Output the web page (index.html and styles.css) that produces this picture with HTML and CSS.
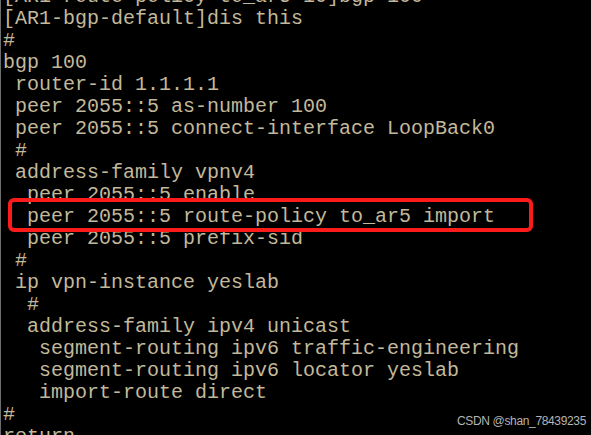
FILE: index.html
```html
<!DOCTYPE html>
<html>
<head>
<meta charset="utf-8">
<link rel="stylesheet" href="styles.css">
</head>
<body>
<div class="screen">
  <div class="term">
    <div class="line">[AR1-route-policy-to_ar5-10]bgp 100</div>
    <div class="line">[AR1-bgp-default]dis this</div>
    <div class="line">#</div>
    <div class="line">bgp 100</div>
    <div class="line"> router-id 1.1.1.1</div>
    <div class="line"> peer 2055::5 as-number 100</div>
    <div class="line"> peer 2055::5 connect-interface LoopBack0</div>
    <div class="line"> #</div>
    <div class="line"> address-family vpnv4</div>
    <div class="line">  peer 2055::5 enable</div>
    <div class="line hl">  peer 2055::5 route-policy to_ar5 import</div>
    <div class="line">  peer 2055::5 prefix-sid</div>
    <div class="line"> #</div>
    <div class="line"> ip vpn-instance yeslab</div>
    <div class="line">  #</div>
    <div class="line">  address-family ipv4 unicast</div>
    <div class="line">   segment-routing ipv6 traffic-engineering</div>
    <div class="line">   segment-routing ipv6 locator yeslab</div>
    <div class="line">   import-route direct</div>
    <div class="line">#</div>
    <div class="line">return</div>
  </div>
  <div class="watermark">CSDN @shan_78439235</div>
</div>
</body>
</html>
```

FILE: styles.css
```css
html, body {
  margin: 0;
  padding: 0;
  background: #000;
  overflow: hidden;
}
.screen {
  position: relative;
  width: 591px;
  height: 435px;
  overflow: hidden;
  background: #000;
  box-sizing: border-box;
  border-left: 1px solid #6e6e6e;
}
.term {
  margin-top: -14px;
  padding-left: 2px;
  font-family: "Liberation Mono", "Courier New", monospace;
  font-size: 20px;
  line-height: 22px;
  color: #c2b99b;
}
.line {
  white-space: pre;
  height: 22px;
}
.hl {
  position: relative;
}
.hl::after {
  content: "";
  position: absolute;
  left: 5px;
  top: -8px;
  width: 525px;
  height: 34px;
  box-sizing: border-box;
  border: 4px solid #fb1b1b;
  border-radius: 6px;
}
.watermark {
  position: absolute;
  right: 5px;
  bottom: 7px;
  font-family: "Liberation Sans", Arial, sans-serif;
  font-size: 12px;
  line-height: 13px;
  letter-spacing: -0.35px;
  color: #b4b4b4;
}
```
